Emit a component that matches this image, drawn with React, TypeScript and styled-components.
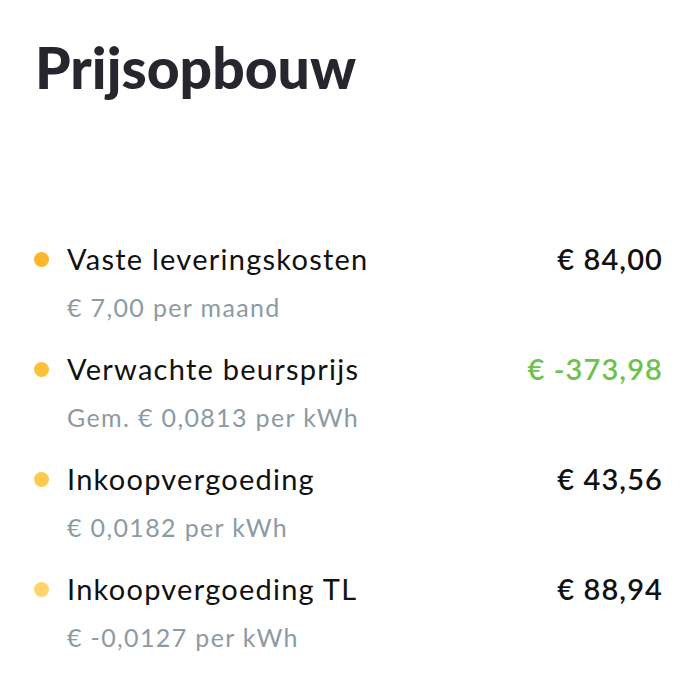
import React from "react";
import styled, { createGlobalStyle } from "styled-components";

const Global = createGlobalStyle`
  html, body { margin: 0; padding: 0; background: #ffffff; }
  body { font-family: Lato, "Noto Sans", sans-serif; -webkit-font-smoothing: antialiased; }
`;

const Page = styled.main`
  width: 698px;
  box-sizing: border-box;
  padding: 30px 35px 0 34px;
`;

const Title = styled.h1`
  margin: 0 0 0 1px;
  font-family: Lato, sans-serif;
  font-weight: 900;
  font-size: 57px;
  line-height: 74px;
  color: #25262e;
  letter-spacing: 0;
`;

const List = styled.ul`
  list-style: none;
  margin: 135px 0 0 0;
  padding: 0;
  display: flex;
  flex-direction: column;
  gap: 22px;
`;

const Row = styled.li`
  display: grid;
  grid-template-columns: 16px 1fr auto;
  column-gap: 17px;
  align-items: center;
`;

const Dot = styled.span<{ $color: string }>`
  width: 15px;
  height: 15px;
  border-radius: 50%;
  background: ${(p) => p.$color};
`;

const Label = styled.span`
  font-size: 29px;
  line-height: 40px;
  color: #111111;
  font-weight: 400;
  letter-spacing: 1.25px;
`;

const Amount = styled.span<{ $positive?: boolean }>`
  font-size: 29px;
  line-height: 40px;
  font-weight: 600;
  letter-spacing: 1.1px;
  color: ${(p) => (p.$positive ? "#6cc24a" : "#111111")};
  text-align: right;
`;

const Sub = styled.span`
  grid-column: 2 / 4;
  margin-top: 8px;
  font-size: 25px;
  line-height: 40px;
  letter-spacing: 1.35px;
  color: #8c9aa4;
`;

const items = [
  { dot: "#fbb62b", label: "Vaste leveringskosten", amount: "€ 84,00", sub: "€ 7,00 per maand" },
  { dot: "#fdc03a", label: "Verwachte beursprijs", amount: "€ -373,98", sub: "Gem. € 0,0813 per kWh", positive: true },
  { dot: "#fec951", label: "Inkoopvergoeding", amount: "€ 43,56", sub: "€ 0,0182 per kWh" },
  { dot: "#fed46b", label: "Inkoopvergoeding TL", amount: "€ 88,94", sub: "€ -0,0127 per kWh" },
];

export default function App() {
  return (
    <>
      <Global />
      <Page>
        <Title>Prijsopbouw</Title>
        <List>
          {items.map((it) => (
            <Row key={it.label}>
              <Dot $color={it.dot} />
              <Label>{it.label}</Label>
              <Amount $positive={it.positive}>{it.amount}</Amount>
              <Sub>{it.sub}</Sub>
            </Row>
          ))}
        </List>
      </Page>
    </>
  );
}
